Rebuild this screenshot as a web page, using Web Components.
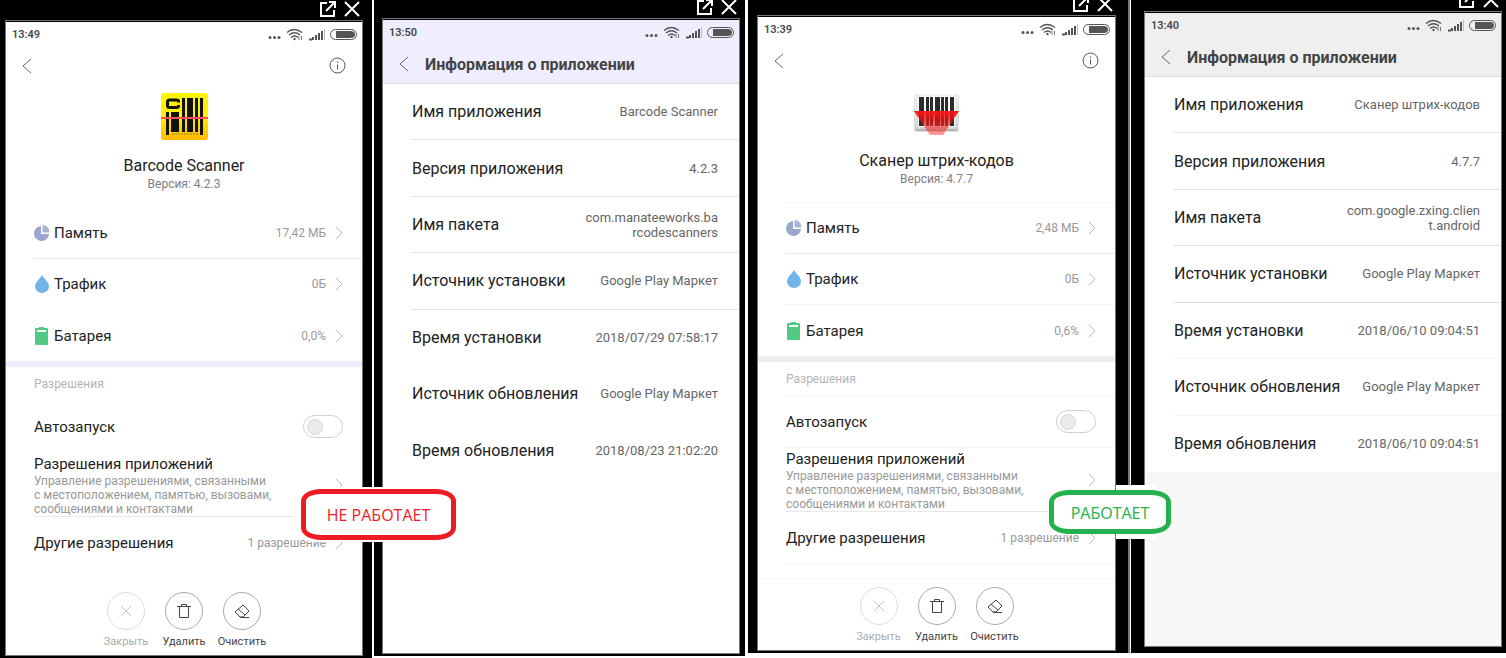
<!DOCTYPE html>
<html lang="ru">
<head>
<meta charset="utf-8">
<meta name="viewport" content="width=device-width, initial-scale=1">
<title>Информация о приложении</title>
<style>
  body {
    margin: 0;
    background: #fff;
    font-family: Roboto, "Noto Sans", sans-serif;
    color: #222;
  }
</style>
</head>
<body>

<compare-board>
  <phone-frame class="first">
    <app-overview time="13:49" name="Barcode Scanner" version="4.2.3" memory="17,42 МБ" traffic="0Б" battery="0,0%" theme="lilac">
      <svg width="47" height="47" viewBox="0 0 47 47" aria-hidden="true">
        <defs>
          <linearGradient id="yellow" x1="0" y1="0" x2="0" y2="1">
            <stop offset="0" stop-color="#fff600"/>
            <stop offset=".5" stop-color="#ffee00"/>
            <stop offset="1" stop-color="#ffb900"/>
          </linearGradient>
        </defs>
        <rect width="47" height="47" rx="3" fill="url(#yellow)"/>
        <path d="M17.500 9.500V8.500Q17.500 7 15.500 7H8.500Q6.500 7 6.500 9V12.500Q6.500 14.500 8.500 14.500H15.500Q17.500 14.500 17.500 13V12" fill="none" stroke="#111" stroke-width="3"/>
        <path d="M5 19h3v23H5zM10 19h8v20h-8zM21 5h3v34h-3zM26 5h6v34h-6zM34 5h3v34h-3zM39 5h3v37h-3z" fill="#111"/>
        <path d="M11 41h26" stroke="#9b7410" stroke-dasharray="2 1"/>
        <path d="M0 25h47" stroke="#ff4d5e" stroke-width="2"/>
      </svg>
    </app-overview>
    <verdict-stamp slot="stamp" kind="bad">НЕ РАБОТАЕТ</verdict-stamp>
  </phone-frame>

  <phone-frame class="second">
    <app-details time="13:50" theme="lilac" name="Barcode Scanner" version="4.2.3" package="com.manateeworks.barcodescanners" installed="2018/07/29 07:58:17" updated="2018/08/23 21:02:20"></app-details>
  </phone-frame>

  <phone-frame class="third">
    <app-overview time="13:39" name="Сканер штрих-кодов" version="4.7.7" memory="2,48 МБ" traffic="0Б" battery="0,6%" theme="gray">
      <svg width="47" height="47" viewBox="0 -5 47 47" overflow="visible" aria-hidden="true">
        <defs>
          <linearGradient id="plate" x1="0" y1="0" x2="0" y2="1">
            <stop offset="0" stop-color="#f2f2f2"/>
            <stop offset="1" stop-color="#d4d4d4"/>
          </linearGradient>
          <linearGradient id="beam" x1="0" y1="0" x2="0" y2="1">
            <stop offset="0" stop-color="#ff1414"/>
            <stop offset=".35" stop-color="#e81010" stop-opacity=".75"/>
            <stop offset="1" stop-color="#ff4040" stop-opacity=".5"/>
          </linearGradient>
        </defs>
        <rect x="1" y="2" width="45" height="37" rx="2" fill="#000" opacity=".12"/>
        <rect x="2" y="1" width="43" height="37" rx="2" fill="#b5b5b5"/>
        <rect x="2" y="1" width="43" height="35" rx="2" fill="url(#plate)"/>
        <rect x="5" y="3" width="37" height="31" fill="#fff"/>
        <path d="M6 4h5v29H6zM13 4h3v29h-3zM17 4h3v29h-3zM22 4h5v29h-5zM28 4h3v29h-3zM32 4h3v29h-3zM37 4h4v29h-4z" fill="#2c2c2c"/>
        <path d="M1 18H46L30 42H17z" fill="url(#beam)"/>
      </svg>
    </app-overview>
    <verdict-stamp slot="stamp" kind="good">РАБОТАЕТ</verdict-stamp>
  </phone-frame>

  <phone-frame class="fourth">
    <app-details time="13:40" theme="gray" name="Сканер штрих-кодов" version="4.7.7" package="com.google.zxing.client.android" installed="2018/06/10 09:04:51" updated="2018/06/10 09:04:51"></app-details>
  </phone-frame>
</compare-board>

<script>
/* Four phones side by side, each one hanging a little differently */
class CompareBoard extends HTMLElement {
  constructor() {
    super();
    this.attachShadow({ mode: 'open' }).innerHTML = `
      <style>
        :host {
          display: grid;
          grid-template-columns: 374fr 374fr 383fr 375fr;
          min-height: 100vh;
          overflow: hidden;
        }
        ::slotted(.first) {
          --head: 20px;
          --pad: 0 9px 2px 5px;
          border-right: 2px solid #fff;
        }
        ::slotted(.second) {
          --head: 18px;
          --pad: 0 5px 2px 8px;
          border-right: 3px solid #fff;
          margin-bottom: 2px;
        }
        ::slotted(.third) {
          --head: 15px;
          --pad: 0 14px 2px 9px;
          border-right: 1px solid #fff;
          box-shadow: inset -2px 0 #777;
          margin-bottom: 5px;
        }
        ::slotted(.fourth) {
          --head: 11px;
          --pad: 0 4px 6px 13px;
          margin-bottom: 5px;
        }
      </style>
      <slot></slot>
    `;
  }
}

/* Black window around a screen, with the open / close buttons on top */
class PhoneFrame extends HTMLElement {
  constructor() {
    super();
    this.attachShadow({ mode: 'open' }).innerHTML = `
      <style>
        :host {
          position: relative;
          display: flex;
          flex-direction: column;
          min-width: 0;
          background: #000;
        }
        .window {
          flex: 1;
          display: flex;
          flex-direction: column;
          padding: var(--pad);
        }
        .head {
          height: var(--head);
          display: flex;
          justify-content: flex-end;
          align-items: flex-end;
          gap: 8px;
          padding: 0 3px 3px 0;
          box-sizing: border-box;
          overflow: hidden;
        }
        button {
          flex-shrink: 0;
          padding: 0;
          border: 0;
          background: none;
          height: 16px;
        }
        svg {
          display: block;
          fill: none;
          stroke: #fff;
          stroke-width: 2;
        }
        .screen {
          flex: 1;
          display: flex;
          flex-direction: column;
          border: 1px solid #777;
          background: #000;
          padding-top: 1px;
        }
        ::slotted(app-overview), ::slotted(app-details) {
          flex: 1;
        }
      </style>
      <div class="window">
        <div class="head">
          <button type="button" aria-label="Открыть в новом окне">
            <svg width="16" height="16" viewBox="0 0 16 16"><path d="M7 2H1v13h13V9M6 10L14 2M9 1h6v6"/></svg>
          </button>
          <button type="button" aria-label="Закрыть окно">
            <svg width="16" height="16" viewBox="0 0 16 16"><path d="M1 1l14 14M15 1L1 15"/></svg>
          </button>
        </div>
        <div class="screen"><slot></slot></div>
      </div>
      <slot name="stamp"></slot>
    `;
  }
}

class StatusBar extends HTMLElement {
  constructor() {
    super();
    this.attachShadow({ mode: 'open' });
  }

  connectedCallback() {
    this.shadowRoot.innerHTML = `
      <style>
        :host {
          display: flex;
          justify-content: space-between;
          align-items: center;
          height: 25px;
          padding: 0 5px 0 6px;
          font-size: 11px;
          font-weight: 600;
          color: #484848;
        }
        svg { display: block; }
      </style>
      <time>${this.getAttribute('time')}</time>
      <svg width="89" height="14" viewBox="0 0 89 14" fill="none" stroke="#555" aria-hidden="true">
        <g fill="#555" stroke="none">
          <circle cx="2" cy="9.500" r="1.500"/><circle cx="6.500" cy="9.500" r="1.500"/><circle cx="11" cy="9.500" r="1.500"/>
        </g>
        <path d="M19 4.500Q26-1.500 34 4.500M21 7Q26.500 2.500 32 7M23 9.500Q26.500 6.500 30 9.500" stroke-width="1.300"/>
        <circle cx="26.500" cy="11" r="1.200" fill="#555" stroke="none"/>
        <path d="M31 8v4M33.500 8v4" stroke="#777"/>
        <path d="M41 11.500h3M45 12v-3" stroke-width="2"/>
        <path d="M48 12V7M51 12V5M54 12V3" stroke-width="2"/>
        <path d="M56.500 12V1" stroke="#bbb"/>
        <rect x="62.500" y="1.500" width="26" height="10" rx="5"/>
        <path d="M68 3h15q4 0 4 3.500t-4 3.500H68z" fill="#555" stroke="none"/>
      </svg>
    `;
  }
}

/* Row with optional icon, value on the right and a chevron */
class SettingRow extends HTMLElement {
  constructor() {
    super();
    this.attachShadow({ mode: 'open' });
  }

  connectedCallback() {
    this.shadowRoot.innerHTML = `
      <style>
        :host {
          display: block;
          margin-left: 28px;
          border-top: 1px solid var(--line, #f4f4f4);
        }
        a {
          display: flex;
          align-items: center;
          height: var(--row, 50px);
          padding-right: 19px;
          color: inherit;
          text-decoration: none;
          font-size: 15px;
        }
        ::slotted(svg) { margin-right: 4px; }
        .label { flex: 1; }
        .value {
          font-size: 12px;
          color: #999;
        }
        .chevron {
          margin-left: 9px;
          fill: none;
          stroke: #bbb;
        }
      </style>
      <a href="#">
        <slot name="icon"></slot>
        <span class="label"><slot></slot></span>
        <span class="value">${this.getAttribute('value') || ''}</span>
        <svg class="chevron" width="8" height="14" viewBox="0 0 8 14"><path d="M1 1l6 6-6 6"/></svg>
      </a>
    `;
  }
}

class RoundAction extends HTMLElement {
  constructor() {
    super();
    this.attachShadow({ mode: 'open' });
  }

  connectedCallback() {
    const off = this.hasAttribute('disabled');
    this.shadowRoot.innerHTML = `
      <style>
        :host { display: block; width: 56px; }
        button {
          display: flex;
          flex-direction: column;
          align-items: center;
          gap: 5px;
          width: 100%;
          padding: 0;
          border: 0;
          background: none;
          font: 11px/14px Roboto, sans-serif;
          color: #444;
        }
        .circle {
          display: grid;
          place-items: center;
          width: 36px;
          height: 36px;
          border: 1px solid #aaa;
          border-radius: 50%;
        }
        button:disabled { color: #aaa; }
        button:disabled .circle { border-color: #ddd; }
      </style>
      <button type="button" ${off ? 'disabled' : ''}>
        <span class="circle"><slot name="icon"></slot></span>
        <slot></slot>
      </button>
    `;
  }
}

class AppOverview extends HTMLElement {
  constructor() {
    super();
    this.attachShadow({ mode: 'open' });
  }

  connectedCallback() {
    const get = (key) => this.getAttribute(key) || '';

    this.shadowRoot.innerHTML = `
      <style>
        :host {
          display: flex;
          flex-direction: column;
          background: #fff;
          --band: #eeecfe;
          --soft: #fff;
          --mid: #e8e8e8;
        }
        :host([theme="gray"]) {
          --band: #eee;
          --soft: #f4f4f4;
        }
        nav {
          display: flex;
          justify-content: space-between;
          align-items: center;
          height: 37px;
          padding: 0 16px;
        }
        nav button {
          padding: 0;
          border: 0;
          background: none;
        }
        svg { display: block; fill: none; }
        .hero {
          text-align: center;
          padding: 9px 0 15px;
        }
        .hero ::slotted(svg) {
          display: block;
          margin: 0 auto 16px;
        }
        h1 {
          margin: 0;
          font-size: 16px;
          line-height: 20px;
          font-weight: 400;
        }
        .version {
          margin: 0;
          font-size: 12px;
          line-height: 16px;
          color: #808080;
        }
        .usage { border-bottom: 6px solid var(--band); }
        .usage setting-row { --line: var(--soft); }
        .usage .traffic { --line: var(--mid); }
        .usage .battery { --row: 51px; }
        h2 {
          margin: 0 0 0 28px;
          padding-top: 2px;
          font-size: 12px;
          line-height: 31px;
          font-weight: 400;
          color: #b4b4b4;
        }
        .autostart {
          display: flex;
          align-items: center;
          justify-content: space-between;
          height: 51px;
          margin-left: 28px;
          padding-right: 19px;
          border-top: 1px solid var(--soft);
          font-size: 15px;
        }
        .autostart input {
          appearance: none;
          display: flex;
          align-items: center;
          box-sizing: border-box;
          width: 40px;
          height: 23px;
          margin: 0;
          padding: 0 3px;
          border: 1px solid #d0d0d0;
          border-radius: 12px;
        }
        .autostart input::before {
          content: "";
          box-sizing: border-box;
          width: 16px;
          height: 16px;
          border: 1px solid #d8d8d8;
          border-radius: 50%;
          background: #ebebeb;
        }
        .permissions { --line: var(--soft); --row: 63px; }
        .permissions b {
          display: block;
          font-weight: 400;
          line-height: 20px;
        }
        .permissions small {
          display: block;
          font-size: 12px;
          line-height: 14px;
          color: #999;
        }
        .other { --line: var(--mid); --row: 51px; }
        .rule {
          margin-left: 28px;
          border-top: 1px solid var(--soft);
        }
        footer {
          display: flex;
          justify-content: center;
          gap: 2px;
          margin-top: auto;
          padding: 8px 0 6px;
          border-top: 1px solid var(--soft);
        }
      </style>

      <status-bar time="${get('time')}"></status-bar>
      <nav>
        <button type="button" aria-label="Назад">
          <svg width="10" height="16" viewBox="0 0 10 16" stroke="#666"><path d="M9 1L1 8l8 7"/></svg>
        </button>
        <button type="button" aria-label="Сведения">
          <svg width="17" height="17" viewBox="0 0 17 17" stroke="#555"><circle cx="8.500" cy="8.500" r="7.500"/><path d="M8.500 7.500v5M8.500 4.500v1.500"/></svg>
        </button>
      </nav>

      <section class="hero">
        <slot></slot>
        <h1>${get('name')}</h1>
        <p class="version">Версия: ${get('version')}</p>
      </section>

      <section class="usage">
        <setting-row value="${get('memory')}">
          <svg slot="icon" width="16" height="16" viewBox="0 0 16 16"><path d="M7 1v8h8A7.500 7.500 0 1 1 7 1z" fill="#9aa6cc"/><path d="M8.500 0A7 7 0 0 1 15.500 7.500h-7z" fill="#a9b6d3"/></svg>
          Память
        </setting-row>
        <setting-row class="traffic" value="${get('traffic')}">
          <svg slot="icon" width="16" height="18" viewBox="0 0 16 18"><path d="M8 0C10 4 15 7 15 11.500A7 6.500 0 0 1 1 11.500C1 7 6 4 8 0z" fill="#6fb5ea"/></svg>
          Трафик
        </setting-row>
        <setting-row class="battery" value="${get('battery')}">
          <svg slot="icon" width="16" height="18" viewBox="0 0 16 18"><path d="M5 0h5v1h3q1 0 1 1v15q0 1-1 1H2q-1 0-1-1V2q0-1 1-1h3z" fill="#50c985"/><path d="M3 3h9v2H3z" fill="#fff"/></svg>
          Батарея
        </setting-row>
      </section>

      <h2>Разрешения</h2>
      <label class="autostart">Автозапуск <input type="checkbox" role="switch"></label>
      <setting-row class="permissions">
        <b>Разрешения приложений</b>
        <small>Управление разрешениями, связанными<br>с местоположением, памятью, вызовами,<br>сообщениями и контактами</small>
      </setting-row>
      <setting-row class="other" value="1 разрешение">Другие разрешения</setting-row>
      <div class="rule"></div>

      <footer>
        <round-action disabled>
          <svg slot="icon" width="12" height="12" viewBox="0 0 12 12" stroke="#c4c4c4"><path d="M1 1l10 10M11 1L1 11"/></svg>
          Закрыть
        </round-action>
        <round-action>
          <svg slot="icon" width="14" height="14" viewBox="0 0 14 14" stroke="#444"><path d="M0 2.500h14M4.500 2.500v-2h5v2M2.500 2.500v11h9v-11"/></svg>
          Удалить
        </round-action>
        <round-action>
          <svg slot="icon" width="16" height="14" viewBox="0 0 16 14" stroke="#444"><path d="M9 1l6 6-6 6H6L1 8zM4 5l7 6M6 13.500h9"/></svg>
          Очистить
        </round-action>
      </footer>
    `;
  }
}

class AppDetails extends HTMLElement {
  constructor() {
    super();
    this.attachShadow({ mode: 'open' });
  }

  connectedCallback() {
    const get = (key) => this.getAttribute(key) || '';
    const rows = [
      ['Имя приложения', get('name')],
      ['Версия приложения', get('version')],
      ['Имя пакета', get('package')],
      ['Источник установки', 'Google Play Маркет'],
      ['Время установки', get('installed')],
      ['Источник обновления', 'Google Play Маркет'],
      ['Время обновления', get('updated')]
    ];

    this.shadowRoot.innerHTML = `
      <style>
        :host {
          display: flex;
          flex-direction: column;
          background: #fff;
          --bar: #efedfe;
          --soft: #fff;
        }
        :host([theme="gray"]) {
          background: #f7f7f7;
          --bar: #efefef;
          --soft: #f4f4f4;
        }
        header {
          background: var(--bar);
          border-bottom: 1px solid #dcdce0;
        }
        nav {
          display: flex;
          align-items: center;
          gap: 16px;
          height: 38px;
          padding: 0 16px;
        }
        nav button {
          padding: 0;
          border: 0;
          background: none;
        }
        svg { display: block; }
        h1 {
          margin: 0;
          font-size: 16px;
          font-weight: 700;
          color: #444;
        }
        dl {
          display: grid;
          grid-auto-rows: 1fr;
          min-height: 396px;
          margin: 0;
          padding-left: 29px;
          background: #fff;
          border-bottom: 1px solid var(--soft);
          box-sizing: border-box;
        }
        .row {
          display: flex;
          align-items: center;
          justify-content: space-between;
          padding-right: 21px;
          border-bottom: 1px solid #e2e2e2;
        }
        .row:nth-child(n + 5) { border-color: var(--soft); }
        .row:last-child { border-color: #fff; }
        dt { font-size: 16px; }
        dd {
          max-width: 134px;
          margin: 0;
          font-size: 13px;
          line-height: 15px;
          text-align: right;
          color: #666;
        }
        .row:nth-child(3) dd { word-break: break-all; }
      </style>

      <header>
        <status-bar time="${get('time')}"></status-bar>
        <nav>
          <button type="button" aria-label="Назад">
            <svg width="10" height="16" viewBox="0 0 10 16" fill="none" stroke="#666"><path d="M9 1L1 8l8 7"/></svg>
          </button>
          <h1>Информация о приложении</h1>
        </nav>
      </header>
      <dl>
        ${rows.map(([label, value]) => `<div class="row"><dt>${label}</dt><dd>${value}</dd></div>`).join('')}
      </dl>
    `;
  }
}

/* Rounded verdict laid over the seam between two phones */
class VerdictStamp extends HTMLElement {
  constructor() {
    super();
    this.attachShadow({ mode: 'open' }).innerHTML = `
      <style>
        :host {
          position: absolute;
          z-index: 1;
          right: -84px;
          bottom: 118px;
          width: 155px;
          height: 51px;
          color: #ed1c24;
          font: 16px/20px "Open Sans", sans-serif;
        }
        .ring {
          display: grid;
          place-items: center;
          box-sizing: border-box;
          height: 100%;
          border: 5px solid currentColor;
          border-radius: 20px / 12px;
          background: #fff;
          box-shadow: -6px 0 0 2px #fff;
        }
        :host([kind="good"]) {
          right: -41px;
          bottom: 119px;
          width: 122px;
          height: 44px;
          color: #22b14c;
        }
        :host([kind="good"]) .ring {
          padding-top: 2px;
          box-shadow: none;
        }
        /* white patch over the black window edge */
        :host([kind="good"])::before {
          content: "";
          position: absolute;
          z-index: -1;
          inset: -5px 12px -5px 67px;
          border-radius: 0 8px 8px 0;
          background: #fff;
        }
      </style>
      <div class="ring"><slot></slot></div>
    `;
  }
}

customElements.define('compare-board', CompareBoard);
customElements.define('phone-frame', PhoneFrame);
customElements.define('status-bar', StatusBar);
customElements.define('setting-row', SettingRow);
customElements.define('round-action', RoundAction);
customElements.define('app-overview', AppOverview);
customElements.define('app-details', AppDetails);
customElements.define('verdict-stamp', VerdictStamp);
</script>
</body>
</html>
